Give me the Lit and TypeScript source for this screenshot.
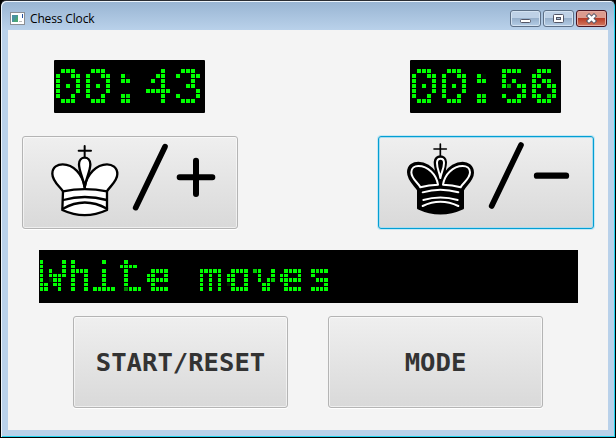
import { LitElement, html, css, svg } from "lit";
import { customElement, property } from "lit/decorators.js";

interface Grid {
  period: number;
  /** First pixel of every lit cell inside one period. */
  cols: number[];
  rows: number[];
  /** Distance from a cell's first pixel to its sampling point. */
  probe: number;
}

const CLOCK_GRID: Grid = { period: 5, cols: [2], rows: [4], probe: 2 };
const MESSAGE_GRID: Grid = {
  period: 40,
  cols: [1, 5, 10, 14, 19, 23, 28, 32, 37],
  rows: [2, 6, 10, 15, 19, 24, 28, 33, 37],
  probe: 1,
};

/** Dot-matrix readout: live text sampled onto a grid of square cells. */
@customElement("led-display")
class LedDisplay extends LitElement {
  @property() text = "";
  @property({ attribute: false }) grid: Grid = CLOCK_GRID;
  @property({ type: Number }) width = 151;
  @property({ type: Number }) size = 50;
  @property({ type: Number }) baseline = 43;
  /** One or more glyph positions, as in the SVG x attribute. */
  @property() start = "0";

  static styles = css`
    :host { display: block; background: #000; border-radius: 1px; height: 53px; }
    svg { display: block; overflow: visible; }
    text { font-family: "Liberation Mono", monospace; fill: #0f0; white-space: pre; }
    .tall { font-size: 1.07em; }
  `;

  render() {
    const { period: p, cols, rows, probe } = this.grid;
    const at = (v: number, d: number) => (v + d + p) % p;
    const lines =
      cols.map((c) => `M${at(c, -1)} 0h1v${p}h-1z`).join("") +
      rows.map((r) => `M0 ${at(r, -1)}h${p}v1h-${p}z`).join("");
    const runs = this.text.split(/([A-Zt]+)/).filter(Boolean);
    return html`<svg width=${this.width} height="53">
      <defs>
        <filter id="dots" filterUnits="userSpaceOnUse" x="0" y="0" width=${this.width} height="53" color-interpolation-filters="sRGB">
          <feGaussianBlur in="SourceGraphic" stdDeviation="0.9" result="soft" />
          ${cols.map((c, i) => svg`<feFlood flood-color="#0f0" x=${at(c, probe)} y="0" width="1" height=${p} result=${"c" + i} />`)}
          <feMerge x="0" y="0" width=${p} height=${p} result="cols">${cols.map((_, i) => svg`<feMergeNode in=${"c" + i} />`)}</feMerge>
          ${rows.map((r, i) => svg`<feFlood flood-color="#0f0" x="0" y=${at(r, probe)} width=${p} height="1" result=${"r" + i} />`)}
          <feMerge x="0" y="0" width=${p} height=${p} result="rows">${rows.map((_, i) => svg`<feMergeNode in=${"r" + i} />`)}</feMerge>
          <feComposite in="cols" in2="rows" operator="in" x="0" y="0" width=${p} height=${p} />
          <feTile result="probes" />
          <feComposite in="probes" in2="soft" operator="in" />
          <feComponentTransfer><feFuncA type="linear" slope="24" intercept="-8.6" /></feComponentTransfer>
          <feMorphology operator="dilate" radius="2" />
        </filter>
        <pattern id="lines" width=${p} height=${p} patternUnits="userSpaceOnUse"><path d=${lines} fill="#000" /></pattern>
      </defs>
      <text x=${this.start} y=${this.baseline} font-size=${this.size} filter="url(#dots)">${runs.map(
        (run) => svg`<tspan class=${/[A-Zt]/.test(run) ? "tall" : "plain"}>${run}</tspan>`
      )}</text>
      <rect width=${this.width} height="53" fill="url(#lines)" />
    </svg>`;
  }
}

const stroke = (d: string, w: number, c = "#000", f = "none") =>
  svg`<path d=${d} stroke=${c} stroke-width=${w} fill=${f} stroke-linecap="round" stroke-linejoin="round"/>`;

@customElement("app-root")
export class AppRoot extends LitElement {
  static styles = css`
    :host { display: block; width: 616px; height: 438px; background: #000; font-family: "Open Sans", sans-serif; }
    * { box-sizing: border-box; }
    .window { width: 616px; height: 438px; border: 1px solid #000; border-top: 1px solid #2a2d33; border-radius: 6px 6px 0 0;
      background: linear-gradient(#98b4d2, #b9d1ea 29px, #b9d1ea);
      box-shadow: inset 1px 1px 0 #edf4fb, inset -1px -1px 0 #22d3ee; padding: 0 7px 7px; }
    .title { height: 29px; display: flex; align-items: center; padding: 5px 1px 0 2px; }
    .title span { font-size: 12px; color: #000; margin-left: 5px; letter-spacing: -0.15px; flex: 1; line-height: 16px; padding-top: 2px; }
    .caption { display: flex; gap: 2px; }
    .cap { width: 31px; height: 17px; border: 1px solid #5d7087; border-radius: 3px; display: block;
      background: linear-gradient(#bed1e6 0 45%, #97b0cb 50%, #b4cde6); box-shadow: inset 0 0 0 1px #d3e2f1; }
    .cap.close { border-color: #4a1420; background: linear-gradient(#dc9b8e 0 45%, #b93c26 50%, #d27a62); box-shadow: inset 0 0 0 1px #e4aaa0; }
    .cap svg { display: block; margin: -1px; }
    .client { background: #f4f4f4; height: 400px; padding: 30px 14px 0; }
    .players { display: flex; justify-content: space-between; }
    .player { display: flex; flex-direction: column; gap: 23px; align-items: center; width: 216px; }
    .player led-display { width: 151px; margin-right: 1px; }
    .message { width: 539px; margin: 21px 0 13px 17px; }
    .btn { display: flex; align-items: center; justify-content: center; padding: 0; border: 1px solid #b4b4b4; border-radius: 3px;
      background: linear-gradient(#efefef, #d9d9d9); box-shadow: inset 0 0 0 1px #ffffff90, 0 1px 0 #fff;
      font: bold 25.6px "DejaVu Sans Mono", monospace; color: #333; width: 215px; height: 92px; }
    .btn.king { width: 216px; height: 93px; }
    .btn.king svg { display: block; margin: -1px; flex: none; }
    .btn.focus { border-color: #039ed3; box-shadow: inset 0 0 0 1px #a9dcef, 0 0 0 1px #c5e8f4; }
    .actions { display: flex; gap: 40px; padding-left: 51px; }
  `;

  whiteKing() {
    return svg`
      ${stroke("M212 48V84M194 62H231", 6)}
      ${stroke("M147 184C139 170 115 155 115 131C115 110 132 103 146 103C178 103 206 132 212 172C218 132 248 103 279 103C294 103 310 112 310 132C310 155 286 170 279 184V240Q212 271 145 240Z", 7, "#000", "#fff")}
      ${stroke("M212 172C208 142 195 125 195 103C195 76 229 76 229 103C229 125 216 142 212 172Z", 7, "#000", "#fff")}
      ${stroke("M147 184Q212 171 279 184M148 210Q212 192 278 210M147 236Q212 199 279 236", 7)}
      ${stroke("M365 233L453 50", 17)}${stroke("M497 142H595M546 92V192", 18)}`;
  }

  blackKing() {
    return svg`
      ${stroke("M211 42V78M192 57H229", 5)}
      ${stroke("M144 180C136 166 114 151 114 127C114 106 131 98 145 98C164 98 186 111 197 130C200 119 194 113 194 96C194 73 228 73 228 96C228 113 222 119 225 130C236 111 259 98 278 98C292 98 309 107 309 128C309 151 285 166 279 180V235Q211 266 144 235Z", 6, "#000", "#000")}
      ${stroke("M151 172C146 159 124 148 124 127C124 114 134 108 145 108C174 108 199 133 204 164Q176 165 151 172ZM272 172C277 159 300 148 300 127C300 114 290 108 278 108C249 108 224 133 219 164Q247 165 272 172ZM211 144C208 126 201 116 201 99C201 82 222 82 222 99C222 116 214 126 211 144Z", 6, "#fff", "#000")}
      ${stroke("M158 187Q211 171 265 187M160 210Q211 195 263 210M158 228Q211 203 265 228", 6, "#fff")}
      ${stroke("M365 228L453 45", 17)}${stroke("M501 137H588", 19)}`;
  }

  render() {
    return html`<div class="window">
      <div class="title">
        <svg width="15" height="13" viewBox="0 0 15 13"><rect x=".5" y=".5" width="14" height="12" fill="#fff" stroke="#8c8f94"/><rect x="2" y="3" width="6" height="7" fill="#4a93a0"/><path d="M8 3v7H3z" fill="#4aa577"/><path d="M12 2h1v4h-1z" fill="#2853a0"/><path d="M9 9h3v1H9z" fill="#bbb"/></svg>
        <span>Chess Clock</span>
        <div class="caption">
          <i class="cap"><svg width="31" height="17"><rect x="10.5" y="9.5" width="10" height="3" rx="1" fill="#fff" stroke="#535666"/></svg></i>
          <i class="cap"><svg width="31" height="17"><rect x="10.5" y="4.5" width="10" height="8" rx="1" fill="#fff" stroke="#535666"/><rect x="13.5" y="7.5" width="4" height="2" fill="#a8bed4" stroke="#535666"/></svg></i>
          <i class="cap close"><svg width="31" height="17"><path d="M13 6L18 11M18 6L13 11" stroke="#535666" stroke-width="4.4" stroke-linecap="square"/><path d="M13 6L18 11M18 6L13 11" stroke="#fff" stroke-width="2.5" stroke-linecap="square"/></svg></i>
        </div>
      </div>
      <div class="client">
        <div class="players">
          <div class="player">
            <led-display text="00:43" start="-1 29 56.8 89 119"></led-display>
            <button class="btn king"><svg width="216" height="93" viewBox="24 18 648 279">${this.whiteKing()}</svg></button>
          </div>
          <div class="player">
            <led-display text="00:56" start="-1 29 56.8 89 119"></led-display>
            <button class="btn king focus"><svg width="216" height="93" viewBox="24 18 648 279">${this.blackKing()}</svg></button>
          </div>
        </div>
        <led-display class="message" text="White moves" width="539" size="44.44" baseline="41"
          start="-1.8 26.3 51 77.2 106.2 133 159.5 186.2 213 239.5 266.2" .grid=${MESSAGE_GRID}></led-display>
        <div class="actions"><button class="btn">START/RESET</button><button class="btn">MODE</button></div>
      </div>
    </div>`;
  }
}
